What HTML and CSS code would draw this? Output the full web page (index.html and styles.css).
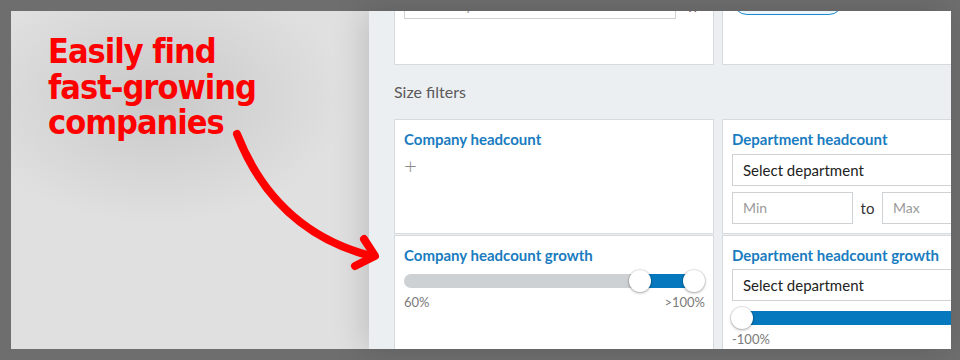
FILE: index.html
```html
<!DOCTYPE html>
<html lang="en">
<head>
<meta charset="utf-8">
<title>Easily find fast-growing companies</title>
<link rel="stylesheet" href="styles.css">
</head>
<body>
<div class="frame">
  <div class="promo">
    <h1 class="headline">Easily find<br>fast-growing<br>companies</h1>
  </div>
  <div class="shot">
    <div class="shot-inner">
      <div class="grid">
        <div class="card top-card">
          <div class="kw-row">
            <div class="text-input kw-input">Enter keywords...</div>
            <span class="clear">×</span>
          </div>
        </div>
        <div class="card top-card">
          <div class="pill"></div>
        </div>
      </div>
      <div class="section-label">Size filters</div>
      <div class="grid filters">
        <div class="card filter-card">
          <div class="filter-title">Company headcount</div>
          <div class="add">+</div>
        </div>
        <div class="card filter-card">
          <div class="filter-title">Department headcount</div>
          <div class="select">Select department</div>
          <div class="range-row">
            <div class="text-input range-input">Min</div>
            <span class="to">to</span>
            <div class="text-input range-input">Max</div>
          </div>
        </div>
        <div class="card filter-card">
          <div class="filter-title">Company headcount growth</div>
          <div class="slider">
            <div class="track"></div>
            <div class="fill" style="left: 78.5%; right: 3.5%;"></div>
            <div class="handle" style="left: 78.5%;"></div>
            <div class="handle" style="left: 96.5%;"></div>
          </div>
          <div class="slider-labels"><span>60%</span><span>&gt;100%</span></div>
        </div>
        <div class="card filter-card">
          <div class="filter-title">Department headcount growth</div>
          <div class="select select-tight">Select department</div>
          <div class="slider slider-low">
            <div class="fill" style="left: 10px; right: 0;"></div>
            <div class="handle" style="left: 10px;"></div>
          </div>
          <div class="slider-labels"><span>-100%</span></div>
        </div>
      </div>
    </div>
  </div>
  <svg class="arrow" width="960" height="360" viewBox="0 0 960 360">
    <path d="M237,134 Q275,231 371,256" fill="none" stroke="#ff0000" stroke-width="8" stroke-linecap="round"/>
    <path d="M355,266 L375,256 L364,239" fill="none" stroke="#ff0000" stroke-width="8" stroke-linecap="round" stroke-linejoin="round"/>
  </svg>
</div>
</body>
</html>
```

FILE: styles.css
```css
* { box-sizing: border-box; }
html, body { margin: 0; padding: 0; }
body {
  width: 960px;
  height: 360px;
  overflow: hidden;
  background: #6e6e6e;
  font-family: Lato, "Open Sans", sans-serif;
}
.frame {
  position: relative;
  width: 960px;
  height: 360px;
  padding: 11px 9px 11px 11px;
  display: flex;
}
.promo {
  width: 358px;
  flex: none;
  background:
    radial-gradient(ellipse 190px 125px at 145px 88px, #c9c9c9 0%, #d2d2d2 40%, rgba(224,224,224,0) 100%),
    #e0e0e0;
  padding: 23px 0 0 37px;
}
.headline {
  margin: 0;
  color: #ff0000;
  font-family: "DejaVu Sans Condensed", "Liberation Sans", sans-serif;
  font-weight: 700;
  font-size: 34px;
  line-height: 35.5px;
  letter-spacing: -1px;
}
.shot {
  flex: 1;
  position: relative;
  overflow: hidden;
  background: #eceff2;
  box-shadow: -6px 0 30px rgba(0,0,0,0.14);
}
.shot-inner {
  margin-top: -34px;
  padding-left: 25px;
}
.grid {
  display: grid;
  grid-template-columns: 320px 320px;
  column-gap: 8px;
}
.filters { row-gap: 1px; }
.card {
  background: #fff;
  border: 1px solid #d8dbde;
  padding: 9px 9px;
}
.top-card { height: 88px; }
.text-input {
  height: 32px;
  border: 1px solid #cfd2d5;
  padding: 0 10px;
  font-size: 14px;
  line-height: 30px;
  color: #9a9a9a;
}
.kw-row { display: flex; align-items: flex-start; gap: 12px; }
.kw-row .kw-input {
  width: 272px;
  color: #999;
  line-height: 20px;
  padding-top: 8px;
}
.clear {
  color: #555;
  font-size: 16px;
  line-height: 16px;
  margin-top: 13px;
}
.pill {
  margin-left: 1px;
  width: 110px;
  height: 28px;
  border: 1.5px solid #1a8ad0;
  border-radius: 14px;
  background: #eaf5fc;
}
.section-label {
  margin: 17px 0 17px 0;
  height: 20px;
  font-size: 16px;
  line-height: 20px;
  color: #5a5a5a;
}
.filter-card { min-height: 115px; }
.filter-title {
  font-size: 15px;
  line-height: 20px;
  font-weight: 700;
  color: #1a7cc0;
}
.add {
  margin-top: 6px;
  font-size: 22px;
  line-height: 22px;
  color: #8a8a8a;
  font-weight: 300;
}
.select {
  margin-top: 5px;
  width: 240px;
  height: 32px;
  border: 1px solid #cfd2d5;
  border-right: none;
  padding: 0 10px;
  font-size: 15px;
  line-height: 30px;
  color: #222;
}
.select-tight { margin-top: 4px; }
.range-row {
  margin-top: 6px;
  display: flex;
  align-items: center;
  gap: 0;
}
.range-input { width: 121px; flex: none; }
.to {
  width: 29px;
  text-align: center;
  font-size: 15px;
  color: #333;
}
.slider {
  position: relative;
  height: 22px;
  margin-top: 5px;
  width: 301px;
}
.slider-low { margin-top: 6px; width: 240px; }
.track, .fill {
  position: absolute;
  top: 4px;
  height: 14px;
}
.track {
  left: 0; right: 0;
  background: #cdd1d4;
  border-radius: 7px;
}
.fill { background: #0678bd; }
.handle {
  position: absolute;
  top: 0;
  width: 22px;
  height: 22px;
  margin-left: -11px;
  border-radius: 50%;
  background: #fff;
  box-shadow: 0 0 0 1px rgba(0,0,0,0.08), 0 1px 3px rgba(0,0,0,0.3);
}
.slider-labels {
  display: flex;
  justify-content: space-between;
  width: 301px;
  margin-top: 2px;
  font-size: 13px;
  line-height: 16px;
  color: #7a7a7a;
}
.arrow {
  position: absolute;
  left: 0;
  top: 0;
  pointer-events: none;
}
```
